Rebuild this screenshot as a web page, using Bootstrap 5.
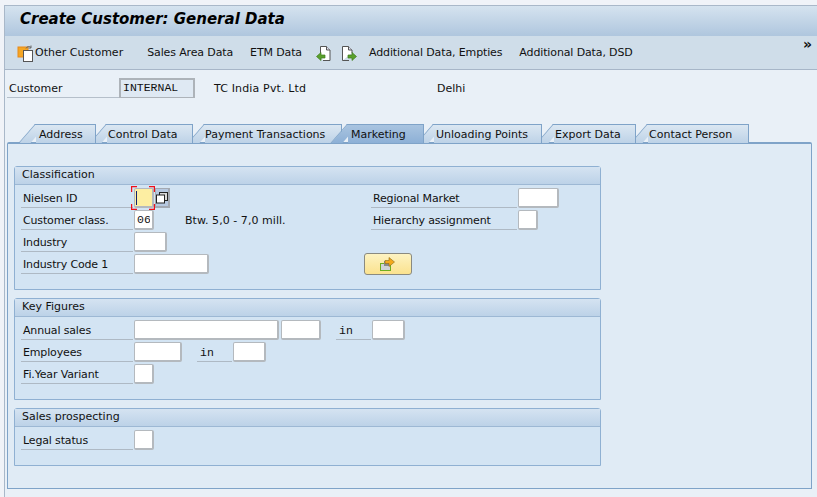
<!DOCTYPE html>
<html lang="en">
<head>
<meta charset="UTF-8">
<title>Create Customer: General Data</title>
<link href="https://cdn.jsdelivr.net/npm/bootstrap@5.3.0/dist/css/bootstrap.min.css" rel="stylesheet">
<style>
html, body { height: 497px; overflow: hidden; }
body { background: #f0f3f8; font-family: "DejaVu Sans", sans-serif; font-size: 11px; color: #111; padding: 5px 0 0 4px; }
.sap-win { height: 492px; background: #e9f0f7; border-top: 1px solid #a9b8c9; border-left: 1px solid #a9b8c9; }
.title-bar { height: 30px; padding-left: 15px; background: linear-gradient(#d5e3ef, #afc6de); font-weight: 700; font-style: italic; font-size: 15px; color: #000; line-height: 27px; }
.tool-bar { height: 34px; background: #cfdde9; border-bottom: 1px solid #a7b6c8; padding: 1px 6px 0 12px; position: relative; }
.tb-btn { background: none; border: 0; padding: 0; font: inherit; color: inherit; line-height: 14px; white-space: nowrap; }
.tb-tight { letter-spacing: -.13px; }
.tb-ico { margin-right: 1px; }
.m24 { margin-left: 24px; }
.m17 { margin-left: 17px; }
.m14 { margin-left: 14px; }
.m9 { margin-left: 9px; }
.m12 { margin-left: 12px; }
.more { position: absolute; right: 5px; top: 1px; font-weight: 700; font-size: 14px; line-height: 14px; }
.head-row { height: 20px; margin-top: 8px; padding-left: 2px; line-height: 20px; }
.head-lbl { width: 112px; height: 20px; border-bottom: 1px solid #b5bfca; padding-left: 2px; line-height: 21px; }
.key-field { width: 76px; height: 20px; background: #dfe9f3; border: 2px solid #adb3b9; border-bottom-width: 1px; font-family: "Liberation Mono", monospace; font-size: 11.5px; line-height: 15px; padding-left: 2px; }
.name-txt { width: 223px; margin-left: 19px; line-height: 21px; letter-spacing: .15px; }
.city-txt { line-height: 21px; }
.tab-strip { margin: 26px 0 0 31px; height: 19px; position: relative; z-index: 1; }
.tab-item { position: relative; height: 19px; isolation: isolate; background: linear-gradient(#dbe7f2, #bdd2e7); border-top: 1px solid #7fa3c8; border-right: 1px solid #7fa3c8; line-height: 20px; color: #111; white-space: nowrap; }
.tab-item::before { content: ""; position: absolute; left: -1px; top: -1px; width: 12px; height: 19px; background: linear-gradient(#dbe7f2, #bdd2e7); border-left: 1px solid #7fa3c8; border-top: 1px solid #7fa3c8; transform: skewX(-41deg); transform-origin: top left; z-index: -1; }
.tab-item.on, .tab-item.on::before { background: linear-gradient(#a9c4e0, #8db0d6); }
.tab-item:nth-child(1) { width: 60px; padding-left: 3px; z-index: 8; }
.tab-item:nth-child(2) { width: 86px; margin-left: 11px; padding-left: 1px; z-index: 7; }
.tab-item:nth-child(3) { width: 137px; margin-left: 12px; z-index: 6; }
.tab-item:nth-child(4) { width: 76px; margin-left: 6px; padding-left: 3px; z-index: 9; }
.tab-item:nth-child(5) { width: 108px; margin-left: 10px; padding-left: 2px; z-index: 5; }
.tab-item:nth-child(6) { width: 82px; margin-left: 12px; padding-left: 1px; z-index: 4; }
.tab-item:nth-child(7) { width: 101px; margin-left: 12px; padding-left: 1px; z-index: 3; }
.tab-panel { width: 805px; height: 347px; margin: -1px 0 0 2px; position: relative; background: #e0ebf5; border: 1px solid #7fa3c8; border-top: 2px solid #7fa3c8; border-radius: 2px 2px 0 0; padding: 22px 0 0 6px; }
.grp { width: 587px; background: #d3e4f3; border: 1px solid #8fb0d2; border-radius: 3px 3px 0 0; margin-bottom: 8px; }
.grp-a { height: 124px; }
.grp-b { height: 102px; }
.grp-c { height: 58px; }
.grp-head { height: 18px; background: linear-gradient(#d5e3f1, #bcd2e8); border-bottom: 1px solid #9db8d4; padding-left: 7px; line-height: 16px; }
.grp-body { padding: 3px 0 0 6px; }
.fld-row { height: 22px; }
.fld-col { flex: 0 0 350px; }
.fld-lbl { width: 112px; height: 20px; border-bottom: 1px solid #aeb9c4; padding-left: 2px; line-height: 22px; white-space: nowrap; letter-spacing: -.15px; }
.fld-lbl.wide { width: 146px; }
.unit-lbl { width: 35px; height: 20px; margin-left: 15px; border-bottom: 1px solid #aeb9c4; padding-left: 3px; font-family: "Liberation Mono", monospace; font-size: 11.5px; line-height: 21px; }
.fld-in { display: block; height: 20px; padding: 0 2px; background: #fff; border: 1px solid #b4b9be; border-width: 1px 2px 2px 1px; border-radius: 2px; font-family: "Liberation Mono", monospace; font-size: 11.5px; line-height: 16px; color: #111; outline: 0; }
.w20 { width: 20px; }
.w33 { width: 33px; }
.w40 { width: 40px; }
.w41 { width: 41px; }
.w48 { width: 48px; }
.w75 { width: 75px; }
.w145 { width: 145px; }
.gap2px { margin-left: 2px; }
.fld-lbl + .fld-in, .unit-lbl + .fld-in { margin-left: 1px; }
.focus-wrap { position: relative; }
.focus-wrap .fld-in { background: #fdeea2; margin-left: 1px; }
.caret-bar { position: absolute; left: 3px; top: 3px; width: 1px; height: 14px; background: #12206e; }
.focus-corners { position: absolute; left: -2px; top: -2px; width: 24px; height: 24px; }
.f4-btn { width: 15px; height: 20px; margin-left: 1px; background: #b6c8e0; border: 1px solid #a3a9b2; border-width: 1px 2px 2px 1px; }
.desc-txt { margin-left: 31px; line-height: 21px; white-space: nowrap; letter-spacing: .05px; }
.act-btn { width: 48px; height: 22px; margin: -1px 0 0 -7px; padding: 0; background: linear-gradient(#fdf3c2, #fbe28e); border: 1px solid #8a8a80; border-radius: 3px; }
</style>
</head>
<body>
<div class="sap-win">
    <div class="title-bar">Create Customer: General Data</div>

    <div class="tool-bar d-flex align-items-center">
        <button type="button" class="tb-btn d-flex align-items-center">
            <svg width="17" height="17" viewBox="0 0 17 17" class="tb-ico">
                <rect x="1" y="2" width="10" height="10" fill="#f5a623" stroke="#e8891a"/>
                <rect x="6.5" y="5.5" width="9" height="11" fill="#fff" stroke="#555"/>
                <path d="M9 3.5a3 3 0 0 1 5 -1M14 .5v2.5h-2.500" fill="none" stroke="#666"/>
            </svg>
            Other Customer
        </button>
        <button type="button" class="tb-btn tb-tight m24">Sales Area Data</button>
        <button type="button" class="tb-btn tb-tight m17">ETM Data</button>
        <svg width="16" height="17" viewBox="0 0 16 17" class="m14">
            <path d="M4.5 8V1.5h6l3.5 3.500v10.500H7" fill="#fff" stroke="#555"/>
            <path d="M10.5 1.500V5H14" fill="#dde" stroke="#555"/>
            <path d="M.5 11.500 5 7.500V10h4v3H5v2.500z" fill="#5aa02c" stroke="#3f7d1e" stroke-width=".7"/>
        </svg>
        <svg width="16" height="17" viewBox="0 0 16 17" class="m9">
            <path d="M1.5 15.500v-14h6L11 5v3M1.5 15.500H8" fill="#fff" stroke="#555"/>
            <path d="M7.5 1.500V5H11" fill="#dde" stroke="#555"/>
            <path d="M15.500 11.500 11 7.500V10H7v3h4v2.500z" fill="#5aa02c" stroke="#3f7d1e" stroke-width=".7"/>
        </svg>
        <button type="button" class="tb-btn tb-tight m12">Additional Data, Empties</button>
        <button type="button" class="tb-btn tb-tight m17">Additional Data, DSD</button>
        <span class="more">&raquo;</span>
    </div>

    <div class="head-row d-flex">
        <div class="head-lbl">Customer</div>
        <div class="key-field">INTERNAL</div>
        <div class="name-txt">TC India Pvt. Ltd</div>
        <div class="city-txt">Delhi</div>
    </div>

    <ul class="tab-strip list-unstyled d-flex mb-0">
        <li class="tab-item">Address</li>
        <li class="tab-item">Control Data</li>
        <li class="tab-item">Payment Transactions</li>
        <li class="tab-item on">Marketing</li>
        <li class="tab-item">Unloading Points</li>
        <li class="tab-item">Export Data</li>
        <li class="tab-item">Contact Person</li>
    </ul>

    <div class="tab-panel">
        <section class="grp grp-a">
            <div class="grp-head">Classification</div>
            <div class="grp-body d-flex">
                <div class="fld-col">
                    <div class="fld-row d-flex">
                        <div class="fld-lbl">Nielsen ID</div>
                        <div class="focus-wrap">
                            <input class="fld-in w20" type="text">
                            <span class="caret-bar"></span>
                            <svg class="focus-corners" viewBox="0 0 24 24">
                                <path d="M.6 6V.6H6M18 .6h5.400V6M.6 18v5.400H6M18 23.400h5.400V18" fill="none" stroke="#f0101a" stroke-width="1.200"/>
                            </svg>
                        </div>
                        <button type="button" class="f4-btn p-0 d-flex align-items-center justify-content-center">
                            <svg width="12" height="12" viewBox="0 0 12 12">
                                <rect x="3.500" y=".5" width="8" height="8" fill="#d9d9d9" stroke="#222"/>
                                <rect x=".5" y="3" width="8" height="8" fill="#fff" stroke="#222"/>
                            </svg>
                        </button>
                    </div>
                    <div class="fld-row d-flex">
                        <div class="fld-lbl">Customer class.</div>
                        <input class="fld-in w20" type="text" value="06">
                        <div class="desc-txt">Btw. 5,0 - 7,0 mill.</div>
                    </div>
                    <div class="fld-row d-flex">
                        <div class="fld-lbl">Industry</div>
                        <input class="fld-in w33" type="text">
                    </div>
                    <div class="fld-row d-flex">
                        <div class="fld-lbl">Industry Code 1</div>
                        <input class="fld-in w75" type="text">
                    </div>
                </div>
                <div class="fld-col">
                    <div class="fld-row d-flex">
                        <div class="fld-lbl wide">Regional Market</div>
                        <input class="fld-in w41" type="text">
                    </div>
                    <div class="fld-row d-flex">
                        <div class="fld-lbl wide">Hierarchy assignment</div>
                        <input class="fld-in w20" type="text">
                    </div>
                    <div class="fld-row"></div>
                    <button type="button" class="act-btn d-flex align-items-center justify-content-center">
                        <svg width="16" height="15" viewBox="0 0 16 15">
                            <rect x=".5" y="6.500" width="10" height="7" fill="#cfd3d6" stroke="#6fae1e"/>
                            <rect x="4" y="4" width="6" height="5" fill="#8a8a8a"/>
                            <path d="M5 3.500h4V.5L14.500 5 9 9.500v-3H5z" fill="#f4a91c" stroke="#8a6a1a" stroke-width=".6"/>
                        </svg>
                    </button>
                </div>
            </div>
        </section>

        <section class="grp grp-b">
            <div class="grp-head">Key Figures</div>
            <div class="grp-body">
                <div class="fld-row d-flex">
                    <div class="fld-lbl">Annual sales</div>
                    <input class="fld-in w145" type="text">
                    <input class="fld-in w40 gap2px" type="text">
                    <div class="unit-lbl">in</div>
                    <input class="fld-in w33" type="text">
                </div>
                <div class="fld-row d-flex">
                    <div class="fld-lbl">Employees</div>
                    <input class="fld-in w48" type="text">
                    <div class="unit-lbl">in</div>
                    <input class="fld-in w33" type="text">
                </div>
                <div class="fld-row d-flex">
                    <div class="fld-lbl">Fi.Year Variant</div>
                    <input class="fld-in w20" type="text">
                </div>
            </div>
        </section>

        <section class="grp grp-c">
            <div class="grp-head">Sales prospecting</div>
            <div class="grp-body">
                <div class="fld-row d-flex">
                    <div class="fld-lbl">Legal status</div>
                    <input class="fld-in w20" type="text">
                </div>
            </div>
        </section>
    </div>
</div>
<script src="https://cdn.jsdelivr.net/npm/bootstrap@5.3.0/dist/js/bootstrap.bundle.min.js"></script>
</body>
</html>
